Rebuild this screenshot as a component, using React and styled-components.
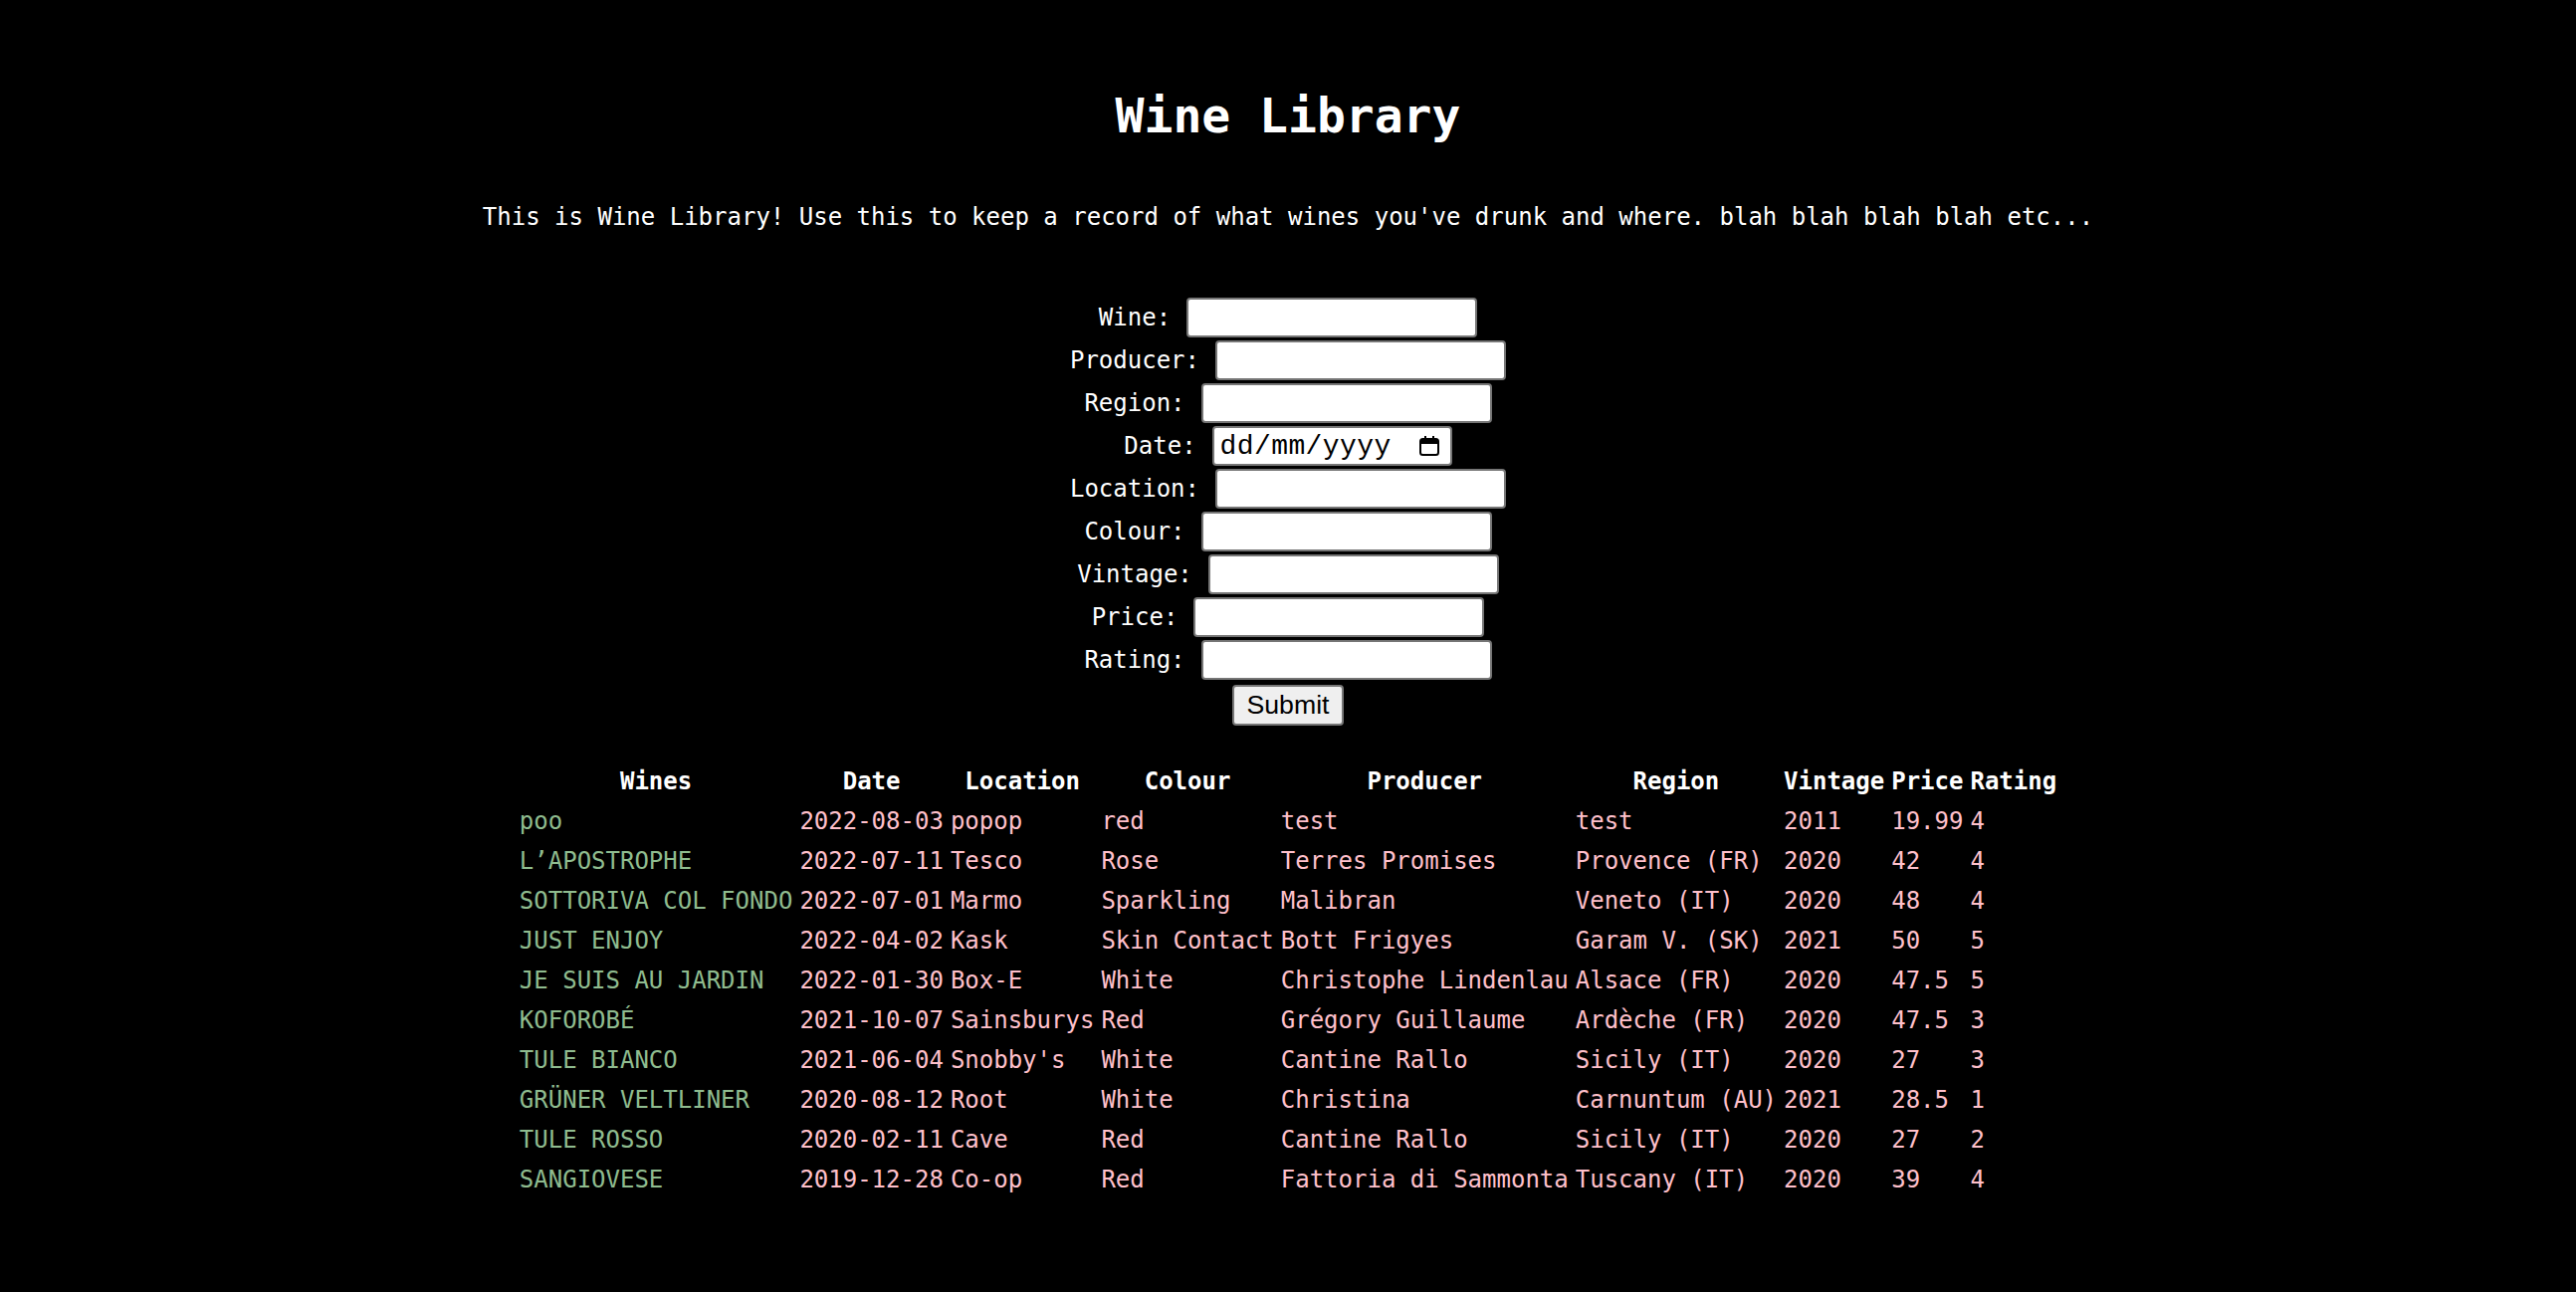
import React from "react";
import styled, { createGlobalStyle } from "styled-components";

const GlobalStyle = createGlobalStyle`
  html, body {
    margin: 0;
    padding: 0;
    background: #000;
  }
  body {
    color: #fff;
    font-family: "DejaVu Sans Mono", "Liberation Mono", monospace;
    font-size: 24px;
  }
`;

const Page = styled.main`
  display: flex;
  flex-direction: column;
  align-items: center;
  padding: 88px 0 60px;
  min-height: 1298px;
  box-sizing: border-box;
`;

const Title = styled.h1`
  margin: 0;
  font-size: 48px;
  font-weight: bold;
  line-height: 56px;
`;

const Intro = styled.p`
  margin: 60px 0 0;
  line-height: 28px;
`;

const Form = styled.form`
  display: flex;
  flex-direction: column;
  align-items: center;
  gap: 3px;
  margin-top: 67px;
`;

const Row = styled.div`
  display: flex;
  align-items: center;
  justify-content: center;
  gap: 16px;
  height: 40px;
`;

const Label = styled.label`
  line-height: 28px;
`;

const TextInput = styled.input`
  box-sizing: border-box;
  width: 292px;
  height: 40px;
  margin: 0;
  border: 2px solid #767676;
  border-radius: 4px;
  background: #fff;
  font-size: 26px;
`;

const DateBox = styled.div`
  box-sizing: border-box;
  width: 241px;
  height: 40px;
  display: flex;
  align-items: center;
  justify-content: space-between;
  padding: 0 10px 0 6px;
  border: 2px solid #767676;
  border-radius: 4px;
  background: #fff;
  color: #000;
  font-family: "Liberation Mono", monospace;
  font-size: 28px;
  letter-spacing: 0.4px;
`;

const SubmitButton = styled.button`
  box-sizing: border-box;
  width: 112px;
  height: 41px;
  margin-top: 2px;
  border: 2px solid #767676;
  border-radius: 4px;
  background: #efefef;
  color: #000;
  font-family: "Liberation Sans", Arial, sans-serif;
  font-size: 26.7px;
  padding: 0;
`;

const Table = styled.table`
  margin-top: 35px;
  border-spacing: 3px;
`;

const Th = styled.th`
  padding: 2px;
  line-height: 33px;
  font-weight: bold;
  color: #fff;
`;

const Td = styled.td`
  padding: 2px;
  line-height: 33px;
  white-space: nowrap;
  color: ${(p) => (p.$name ? "#8fbc8f" : "#ffc0cb")};
`;

const CalendarIcon = () => (
  <svg width="22" height="22" viewBox="0 0 22 22">
    <rect x="2" y="4" width="18" height="16" rx="2.5" fill="none" stroke="#000" strokeWidth="2" />
    <rect x="2" y="4" width="18" height="5" fill="#000" />
    <rect x="6" y="1" width="2" height="4" fill="#000" />
    <rect x="14" y="1" width="2" height="4" fill="#000" />
  </svg>
);

const fields = ["Wine", "Producer", "Region", "Date", "Location", "Colour", "Vintage", "Price", "Rating"];

const wines = [
  ["poo", "2022-08-03", "popop", "red", "test", "test", "2011", "19.99", "4"],
  ["L\u2019APOSTROPHE", "2022-07-11", "Tesco", "Rose", "Terres Promises", "Provence (FR)", "2020", "42", "4"],
  ["SOTTORIVA COL FONDO", "2022-07-01", "Marmo", "Sparkling", "Malibran", "Veneto (IT)", "2020", "48", "4"],
  ["JUST ENJOY", "2022-04-02", "Kask", "Skin Contact", "Bott Frigyes", "Garam V. (SK)", "2021", "50", "5"],
  ["JE SUIS AU JARDIN", "2022-01-30", "Box-E", "White", "Christophe Lindenlau", "Alsace (FR)", "2020", "47.5", "5"],
  ["KOFOROBÉ", "2021-10-07", "Sainsburys", "Red", "Grégory Guillaume", "Ardèche (FR)", "2020", "47.5", "3"],
  ["TULE BIANCO", "2021-06-04", "Snobby's", "White", "Cantine Rallo", "Sicily (IT)", "2020", "27", "3"],
  ["GRÜNER VELTLINER", "2020-08-12", "Root", "White", "Christina", "Carnuntum (AU)", "2021", "28.5", "1"],
  ["TULE ROSSO", "2020-02-11", "Cave", "Red", "Cantine Rallo", "Sicily (IT)", "2020", "27", "2"],
  ["SANGIOVESE", "2019-12-28", "Co-op", "Red", "Fattoria di Sammonta", "Tuscany (IT)", "2020", "39", "4"],
];

const headers = ["Wines", "Date", "Location", "Colour", "Producer", "Region", "Vintage", "Price", "Rating"];

export default function App() {
  return (
    <>
      <GlobalStyle />
      <Page>
        <Title>Wine Library</Title>
        <Intro>
          This is Wine Library! Use this to keep a record of what wines you've drunk and where. blah blah blah blah etc...
        </Intro>
        <Form onSubmit={(e) => e.preventDefault()}>
          {fields.map((f) => (
            <Row key={f}>
              <Label>{f}:</Label>
              {f === "Date" ? (
                <DateBox>
                  <span>dd/mm/yyyy</span>
                  <CalendarIcon />
                </DateBox>
              ) : (
                <TextInput type="text" />
              )}
            </Row>
          ))}
          <SubmitButton type="submit">Submit</SubmitButton>
        </Form>
        <Table>
          <thead>
            <tr>
              {headers.map((h) => (
                <Th key={h}>{h}</Th>
              ))}
            </tr>
          </thead>
          <tbody>
            {wines.map((w, i) => (
              <tr key={i}>
                {w.map((c, j) => (
                  <Td key={j} $name={j === 0}>
                    {c}
                  </Td>
                ))}
              </tr>
            ))}
          </tbody>
        </Table>
      </Page>
    </>
  );
}
